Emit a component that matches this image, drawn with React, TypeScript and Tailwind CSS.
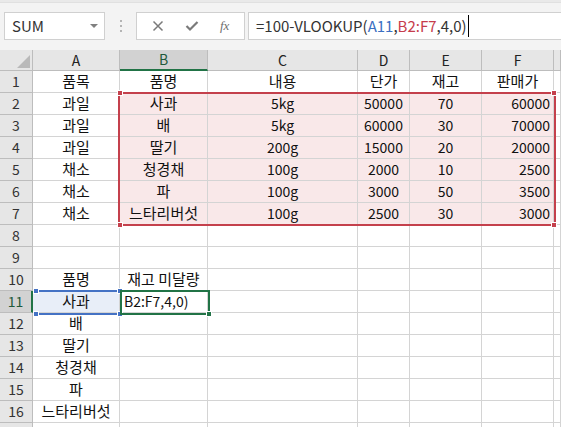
import React from 'react';

// ── Sheet data ───────────────────────────────────────────────────────────────
const COLS = [
  { key: 'A', w: 87, align: 'center' },
  { key: 'B', w: 88, align: 'center' },
  { key: 'C', w: 150, align: 'center' },
  { key: 'D', w: 52, align: 'center' },
  { key: 'E', w: 72, align: 'center' },
  { key: 'F', w: 72, align: 'right' },
  { key: 'G', w: 7, align: 'left' },
] as const;

const ROWS: string[][] = [
  ['품목', '품명', '내용', '단가', '재고', '판매가'],
  ['과일', '사과', '5kg', '50000', '70', '60000'],
  ['과일', '배', '5kg', '60000', '30', '70000'],
  ['과일', '딸기', '200g', '15000', '20', '20000'],
  ['채소', '청경채', '100g', '2000', '10', '2500'],
  ['채소', '파', '100g', '3000', '50', '3500'],
  ['채소', '느타리버섯', '100g', '2500', '30', '3000'],
  [],
  [],
  ['품명', '재고 미달량'],
  ['사과', ''],
  ['배'],
  ['딸기'],
  ['청경채'],
  ['파'],
  ['느타리버섯'],
  [],
];

const FONT = { fontFamily: "'Noto Sans CJK KR', 'Noto Sans', sans-serif" };
const isKorean = (s: string) => /[\uac00-\ud7a3]/.test(s);

// ── Toolbar ──────────────────────────────────────────────────────────────────
function FormulaBar() {
  return (
    <div className="h-[50px] bg-[#e9e9e9] pt-[2px]">
      <div className="h-[48px] bg-[#f3f3f3] border-t border-[#e0e0e0] flex items-start pt-[9px] pl-[4px]">
        <div className="w-[101px] h-[28px] bg-white border border-[#d0d0d0] flex items-center justify-between pl-[7px] pr-[6px]">
          <span className="text-[15px] text-[#333]" style={FONT}>SUM</span>
          <span className="w-0 h-0 border-l-[4px] border-r-[4px] border-t-[4px] border-l-transparent border-r-transparent border-t-[#808080]" />
        </div>
        <div className="w-[31px] h-[28px] flex flex-col items-center justify-center gap-[3px]">
          <span className="w-[2px] h-[2px] bg-[#b4b4b4]" />
          <span className="w-[2px] h-[2px] bg-[#b4b4b4]" />
          <span className="w-[2px] h-[2px] bg-[#b4b4b4]" />
        </div>
        <div className="w-[109px] h-[28px] bg-white border border-[#d0d0d0] flex items-center justify-around px-[4px]">
          <svg width="12" height="12" viewBox="0 0 12 12">
            <path d="M1.5 1.5 L10.5 10.5 M10.5 1.5 L1.5 10.5" stroke="#7a7a7a" strokeWidth="1.5" />
          </svg>
          <svg width="14" height="12" viewBox="0 0 14 12">
            <path d="M1.5 6 L5 9.5 L12.5 2" stroke="#7a7a7a" strokeWidth="2.2" fill="none" />
          </svg>
          <span className="text-[13px] italic text-[#6e6e6e]" style={{ fontFamily: "'Liberation Serif', serif" }}>fx</span>
        </div>
        <div className="ml-[3px] flex-1 h-[28px] bg-white border-y border-l border-[#d0d0d0] flex items-center pl-[7px]">
          <span className="text-[15px] text-[#333] whitespace-nowrap" style={FONT}>
            =100-VLOOKUP(<span className="text-[#3b6fc2]">A11</span>,<span className="text-[#c63c4c]">B2:F7</span>,4,0)
          </span>
          <span className="w-px h-[22px] bg-black ml-[1px]" />
        </div>
      </div>
    </div>
  );
}

// ── Grid ─────────────────────────────────────────────────────────────────────
function HeaderRow() {
  return (
    <div className="flex h-[21px]">
      <div className="w-[33px] bg-[#e6e6e6] border-r border-b border-[#bdbdbd] relative overflow-hidden">
        <svg className="absolute right-[2px] bottom-[2px]" width="13" height="13" viewBox="0 0 13 13">
          <path d="M13 0 L13 13 L0 13 Z" fill="#b9b9b9" />
        </svg>
      </div>
      {COLS.map((c) => {
        const sel = c.key === 'B';
        return (
          <div
            key={c.key}
            style={{ width: c.w, ...FONT }}
            className={`shrink-0 flex items-center justify-center text-[14px] border-r ${
              sel
                ? 'bg-[#d2d2d2] text-[#1f5a3a] border-[#bdbdbd] border-b-2 border-b-[#217346]'
                : 'bg-[#e6e6e6] text-[#222] border-[#bdbdbd] border-b border-b-[#bdbdbd]'
            }`}
          >
            {c.key === 'G' ? '' : c.key}
          </div>
        );
      })}
    </div>
  );
}

function SheetRow({ n, cells }: { n: number; cells: string[] }) {
  const selRow = n === 11;
  const inRed = n >= 2 && n <= 7;
  return (
    <div className="flex h-[22px]">
      <div
        style={FONT}
        className={`w-[33px] shrink-0 flex items-center justify-center text-[14px] border-b border-[#bdbdbd] ${
          selRow
            ? 'bg-[#d2d2d2] text-[#1f5a3a] border-r-2 border-r-[#217346]'
            : 'bg-[#e6e6e6] text-[#333] border-r border-r-[#bdbdbd]'
        }`}
      >
        {n <= 16 ? n : ''}
      </div>
      {COLS.map((c, i) => {
        let bg = 'bg-white';
        if (inRed && i >= 1 && i <= 5) bg = 'bg-[#f9e8e9]';
        if (selRow && i === 0) bg = 'bg-[#e8eef8]';
        const leftText = selRow && i === 1;
        const text = leftText ? 'B2:F7,4,0)' : cells[i] ?? '';
        const align = leftText
          ? 'justify-start pl-[4px]'
          : c.align === 'right' && n !== 1
          ? 'justify-end pr-[3px]'
          : c.align === 'left'
          ? 'justify-start'
          : 'justify-center';
        const over = n === 10 && i === 1;
        return (
          <div
            key={c.key}
            style={{ width: c.w, ...FONT }}
            className={`shrink-0 flex items-center ${align} ${bg} border-r border-b border-[#d4d4d4] ${
              isKorean(text) ? 'text-[15px]' : 'text-[14px]'
            } text-[#111] whitespace-nowrap ${over ? 'overflow-visible' : 'overflow-hidden'}`}
          >
            {text}
          </div>
        );
      })}
    </div>
  );
}

function Handle({ x, y, color }: { x: number; y: number; color: string }) {
  return (
    <div
      className="absolute w-[6px] h-[6px] border border-white"
      style={{ left: x - 3, top: y - 3, backgroundColor: color }}
    />
  );
}

// ── Page ──────────────────────────────────────────────────────────────────────
export default function App() {
  return (
    <div className="relative w-[561px] h-[427px] overflow-hidden bg-white select-none">
      <FormulaBar />
      <div className="relative">
        <HeaderRow />
        {ROWS.map((cells, i) => (
          <SheetRow key={i} n={i + 1} cells={cells} />
        ))}
      </div>

      {/* ── Range highlights ── */}
      <div className="absolute left-[118px] top-[92px] w-[438px] h-[134px] border-2 border-[#c4404c] pointer-events-none" />
      <Handle x={120} y={93} color="#c4404c" />
      <Handle x={554} y={93} color="#c4404c" />
      <Handle x={120} y={225} color="#c4404c" />
      <Handle x={554} y={225} color="#c4404c" />

      <div className="absolute left-[34px] top-[290px] w-[87px] h-[25px] border-y-2 border-[#4472c4] pointer-events-none" />
      <Handle x={36} y={291} color="#4472c4" />
      <Handle x={36} y={314} color="#4472c4" />
      <Handle x={120} y={291} color="#4472c4" />
      <Handle x={120} y={314} color="#4472c4" />

      <div className="absolute left-[120px] top-[290px] w-[90px] h-[25px] border-2 border-[#217346] pointer-events-none" />
      <div className="absolute left-[206px] top-[311px] w-[6px] h-[6px] bg-[#217346] border border-white" />
    </div>
  );
}
